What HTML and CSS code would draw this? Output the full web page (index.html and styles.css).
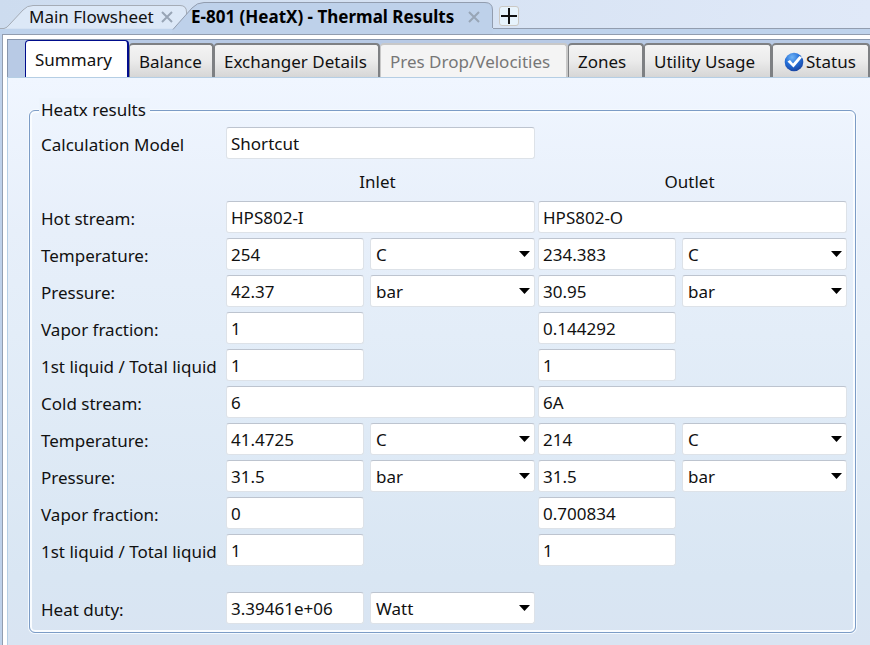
FILE: index.html
```html
<!DOCTYPE html>
<html lang="en">
<head>
<meta charset="utf-8">
<title>E-801 (HeatX) - Thermal Results</title>
<link rel="stylesheet" href="styles.css">
</head>
<body>
<header class="documents">
  <div class="doc doc-main">
    <svg class="doc-shape" viewBox="0 0 187 30" aria-hidden="true"><path d="M0 28.500H4Q7 28 10 24L23 10Q27 5.500 33 5.500H180Q186.500 5.500 186.500 12V28.500Z" fill="#dce8f7"/><path d="M0 28.500H4Q7 28 10 24L23 10Q27 5.500 33 5.500H180Q186.500 5.500 186.500 12V28.500" fill="none" stroke="#a5acb6"/></svg>
    <a href="#main">Main Flowsheet</a>
    <button class="close" aria-label="Close Main Flowsheet"><svg viewBox="0 0 12 12"><path d="M1 1L11 11M11 1L1 11"/></svg></button>
  </div>
  <div class="doc doc-active">
    <svg class="doc-shape" viewBox="0 0 321 34" aria-hidden="true"><path d="M0 30L4 26L20 8Q25 2.500 32 2.500H313Q320.500 2.500 320.500 10V34H0Z" fill="#bed1ea"/><path d="M1 29.500L4 26L20 8Q25 2.500 32 2.500H313Q320.500 2.500 320.500 10V28" fill="none" stroke="#929daf"/></svg>
    <a href="#results">E-801 (HeatX) - Thermal Results</a>
    <button class="close" aria-label="Close Thermal Results"><svg viewBox="0 0 12 12"><path d="M1 1L11 11M11 1L1 11"/></svg></button>
  </div>
  <div class="doc-rest"><button class="add" aria-label="New tab"><svg viewBox="0 0 16 16"><path d="M8 0V16M0 8H16"/></svg></button></div>
</header>
<main class="window">
  <nav class="tabs" aria-label="Result pages">
    <button class="tab selected">Summary</button>
    <button class="tab">Balance</button>
    <button class="tab">Exchanger Details</button>
    <button class="tab" disabled>Pres Drop/Velocities</button>
    <button class="tab">Zones</button>
    <button class="tab">Utility Usage</button>
    <button class="tab status"><svg viewBox="0 0 20 20" aria-hidden="true"><defs><radialGradient id="ball" cx=".4" cy=".25" r=".8"><stop offset="0" stop-color="#71b4f5"/><stop offset=".5" stop-color="#2670d8"/><stop offset="1" stop-color="#173f9c"/></radialGradient></defs><circle cx="10" cy="10" r="9.300" fill="url(#ball)"/><path d="M3.500 9.500L6 8L9 11.500L15.500 4L18 5.500L9.500 15.500Z" fill="#fff"/></svg>Status</button>
  </nav>
  <section class="page">
    <fieldset class="results">
      <legend>Heatx results</legend>
      <div class="row"><label for="model">Calculation Model</label><div class="group"><input class="wide" id="model" value="Shortcut"></div></div>
      <div class="row heads"><span></span><span>Inlet</span><span>Outlet</span></div>
      <div class="row"><label for="hot">Hot stream:</label><div class="group"><input class="wide" id="hot" value="HPS802-I"></div><div class="group"><input class="wide" aria-label="Hot stream outlet" value="HPS802-O"></div></div>
      <div class="row"><label for="ht">Temperature:</label><div class="group"><input id="ht" value="254"><span class="unit"><select aria-label="Unit"><option>C</option></select></span></div><div class="group"><input aria-label="Hot outlet temperature" value="234.383"><span class="unit"><select aria-label="Unit"><option>C</option></select></span></div></div>
      <div class="row"><label for="hp">Pressure:</label><div class="group"><input id="hp" value="42.37"><span class="unit"><select aria-label="Unit"><option>bar</option></select></span></div><div class="group"><input aria-label="Hot outlet pressure" value="30.95"><span class="unit"><select aria-label="Unit"><option>bar</option></select></span></div></div>
      <div class="row"><label for="hv">Vapor fraction:</label><div class="group"><input id="hv" value="1"></div><div class="group"><input aria-label="Hot outlet vapor fraction" value="0.144292"></div></div>
      <div class="row"><label for="hl">1st liquid / Total liquid</label><div class="group"><input id="hl" value="1"></div><div class="group"><input aria-label="Hot outlet liquid ratio" value="1"></div></div>
      <div class="row"><label for="cold">Cold stream:</label><div class="group"><input class="wide" id="cold" value="6"></div><div class="group"><input class="wide" aria-label="Cold stream outlet" value="6A"></div></div>
      <div class="row"><label for="ct">Temperature:</label><div class="group"><input id="ct" value="41.4725"><span class="unit"><select aria-label="Unit"><option>C</option></select></span></div><div class="group"><input aria-label="Cold outlet temperature" value="214"><span class="unit"><select aria-label="Unit"><option>C</option></select></span></div></div>
      <div class="row"><label for="cp">Pressure:</label><div class="group"><input id="cp" value="31.5"><span class="unit"><select aria-label="Unit"><option>bar</option></select></span></div><div class="group"><input aria-label="Cold outlet pressure" value="31.5"><span class="unit"><select aria-label="Unit"><option>bar</option></select></span></div></div>
      <div class="row"><label for="cv">Vapor fraction:</label><div class="group"><input id="cv" value="0"></div><div class="group"><input aria-label="Cold outlet vapor fraction" value="0.700834"></div></div>
      <div class="row"><label for="cl">1st liquid / Total liquid</label><div class="group"><input id="cl" value="1"></div><div class="group"><input aria-label="Cold outlet liquid ratio" value="1"></div></div>
      <div class="row duty"><label for="duty">Heat duty:</label><div class="group"><input id="duty" value="3.39461e+06"><span class="unit"><select aria-label="Unit"><option>Watt</option></select></span></div></div>
    </fieldset>
  </section>
</main>
</body>
</html>
```
FILE: styles.css
```css
* { box-sizing: border-box; }
body {
  margin: 0;
  min-height: 100vh;
  display: flex;
  flex-direction: column;
  overflow-x: hidden;
  background: #bed1ea;
  color: #111;
  font: 17px/24px "Noto Sans", "Open Sans", sans-serif;
}
button, input, select { font: inherit; color: inherit; margin: 0; }
button { border: 0; padding: 0; background: none; }

.documents { display: flex; height: 34px; background: linear-gradient(90deg, #cddcef, #e0e9f8) 0 0 / 100% 29px no-repeat #bfd3ec; }
.doc { position: relative; display: flex; align-items: center; height: 34px; white-space: nowrap; }
.doc a { position: relative; color: inherit; text-decoration: none; }
.doc-shape { position: absolute; left: 0; top: 0; width: 100%; }
.doc-main { width: 187px; padding: 0 14px 0 29px; font-size: 17px; justify-content: space-between; }
.doc-active { width: 321px; margin-left: -15px; padding: 0 13px 0 19px; font-size: 17px; font-weight: 700; color: #000; justify-content: space-between; }
.close { position: relative; display: flex; }
.close svg { width: 12px; height: 12px; fill: none; stroke: #98a5b6; stroke-width: 2; }
.doc-rest { flex: 1; height: 29px; border-bottom: 1px solid #929daf; padding: 6px 6px; }
.add { display: flex; align-items: center; justify-content: center; width: 20px; height: 20px; border: 1px solid #ccc9c4; border-radius: 3px; background: #e7f3fc; }
.add svg { width: 16px; height: 16px; fill: none; stroke: #111; stroke-width: 2; flex: none; }

.window {
  flex: 1;
  display: flex;
  flex-direction: column;
  margin-left: 2px;
  border: solid #929daf;
  border-width: 1px 0 0 1px;
  background: #fff;
  padding: 4px 0 0 4px;
}
.tabs {
  display: grid;
  grid-template-columns: 104px 85px 166px 188px 76px 128px 1fr;
  align-items: end;
  height: 38px;
  padding-left: 17px;
  border: solid #8796ad;
  border-width: 1px 0 0 1px;
  background: #b8cae5;
}
.tab {
  height: 34px;
  border: solid #7e8083;
  border-width: 2px 2px 0 1px;
  border-radius: 4px 4px 0 0;
  background: linear-gradient(#f4f4f4, #ebebeb 50%, #d6d6d6);
  padding: 2px 0 0 9px;
  text-align: left;
  white-space: nowrap;
}
.tab.selected { height: 37px; border: solid #000c8c; border-width: 1px 2px 0 1px; background: #fff; padding: 1px 0 0 9px; }
.tab:disabled { background: #f4f4f4; border-color: #c8c8c8; color: #777; }
.tab.status { display: flex; align-items: center; gap: 2px; padding-left: 11px; }
.status svg { width: 20px; height: 20px; flex: none; }
.page {
  flex: 1;
  border: solid #b5cee4;
  border-width: 1px 0 0 1px;
  padding: 20px 14px 12px 21px;
  background: linear-gradient(#f0f6ff, #e7effa 27%, #e3edf8 45%, #d9e6f3 88%, #d9e4f2);
}
.results {
  min-width: 0;
  margin: 0;
  padding: 5px 8px 8px 11px;
  border: 1px solid #7c9cc6;
  border-radius: 6px;
  box-shadow: 0 0 0 1px #f5faff, inset 0 0 0 2px #f9fcff;
}
.results legend { margin-left: -2px; padding: 0 4px 0 2px; background: #edf4fd; }
.row { display: grid; grid-template-columns: 182px 1fr 1fr; gap: 3px; height: 32px; margin-bottom: 5px; }
.row label { padding-top: 6px; white-space: nowrap; }
.group { display: grid; grid-template-columns: 138fr 165fr; gap: 6px; min-width: 0; }
.heads { text-align: center; align-items: end; }
.heads span { padding: 0 6px 2px 0; }
.wide { grid-column: 1 / 3; }
input, select {
  width: 100%;
  min-width: 0;
  height: 32px;
  border: 1px solid #dde2e8;
  border-top-color: #bdc4cf;
  border-radius: 3px;
  background: #fff;
  padding: 0 4px;
}
select { appearance: none; padding: 1px 24px 0 5px; }
.unit { position: relative; }
.unit::after { content: ""; position: absolute; right: 5px; top: 13px; width: 11px; height: 6px; background: #000; clip-path: polygon(0 0, 100% 0, 50% 100%); pointer-events: none; }
.duty { margin: 26px 0 0; }
```
